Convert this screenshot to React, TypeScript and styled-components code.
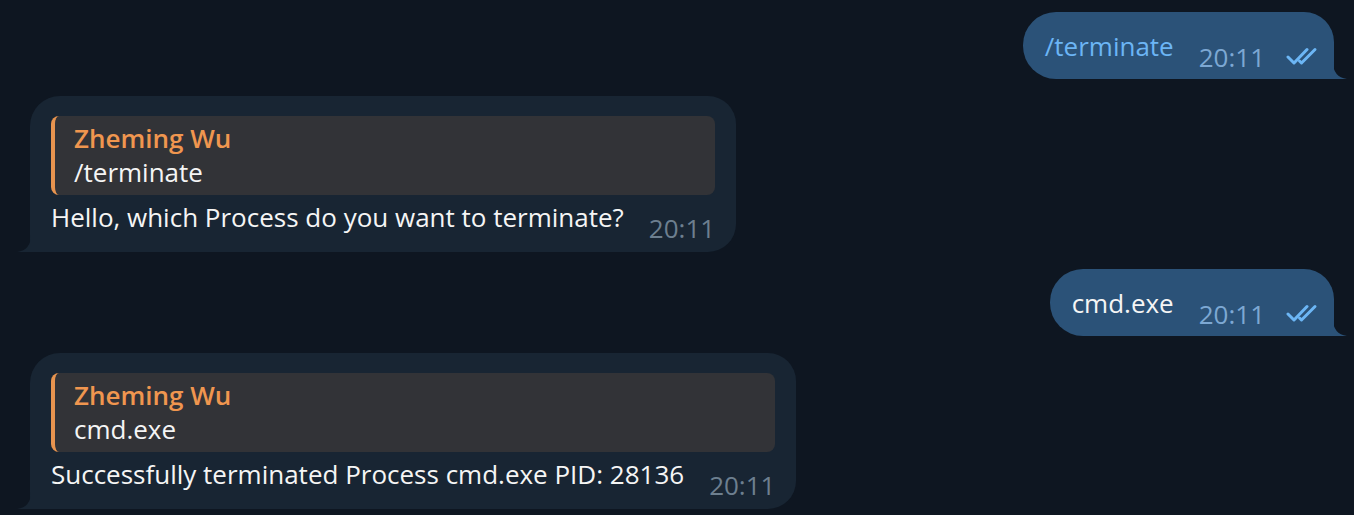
import React from "react";
import styled, { createGlobalStyle } from "styled-components";

const GlobalStyle = createGlobalStyle`
  html, body {
    margin: 0;
    padding: 0;
    background: #0e1621;
  }
  body {
    font-family: "Open Sans", "Noto Sans", sans-serif;
    -webkit-font-smoothing: antialiased;
  }
`;

type Side = "in" | "out";

type Message = {
  side: Side;
  text: string;
  time: string;
  command?: boolean;
  reply?: { author: string; text: string };
};

const messages: Message[] = [
  { side: "out", text: "/terminate", time: "20:11", command: true },
  {
    side: "in",
    text: "Hello, which Process do you want to terminate?",
    time: "20:11",
    reply: { author: "Zheming Wu", text: "/terminate" },
  },
  { side: "out", text: "cmd.exe", time: "20:11" },
  {
    side: "in",
    text: "Successfully terminated Process cmd.exe PID: 28136",
    time: "20:11",
    reply: { author: "Zheming Wu", text: "cmd.exe" },
  },
];

const Chat = styled.main`
  display: flex;
  flex-direction: column;
  gap: 17px;
  padding: 12px 20px 8px 30px;
  min-height: 515px;
  box-sizing: border-box;
`;

const Row = styled.div<{ $side: Side }>`
  display: flex;
  justify-content: ${(p) => (p.$side === "out" ? "flex-end" : "flex-start")};
`;

const Bubble = styled.div<{ $side: Side; $reply?: boolean }>`
  position: relative;
  background: ${(p) => (p.$side === "out" ? "#2b5278" : "#182533")};
  border-radius: ${(p) => (p.$side === "out" ? "33px 30px 0 33px" : "30px 28px 28px 0")};
  padding: ${(p) => (p.$reply ? "20px" : "17px")} ${(p) => (p.$side === "out" ? "12px" : "21px")}
    ${(p) => (p.$reply ? "9px" : "7px")} ${(p) => (p.$side === "out" ? "22px" : "21px")};
  display: flex;
  flex-direction: column;
`;

const Tail = styled.svg<{ $side: Side }>`
  position: absolute;
  bottom: 0;
  width: 14px;
  height: 17px;
  ${(p) => (p.$side === "out" ? "right: -13px;" : "left: -13px;")}
`;

const Quote = styled.div`
  background: #323337;
  border-left: 4px solid #e8944f;
  border-radius: 8px;
  padding: 5px 12px 5px 19px;
  margin-bottom: 5px;
`;

const QuoteAuthor = styled.div`
  color: #f0964f;
  font-weight: 600;
  font-size: 26px;
  line-height: 34px;
`;

const QuoteText = styled.div`
  color: #f5f5f5;
  font-size: 26px;
  line-height: 35px;
`;

const Footer = styled.div`
  display: flex;
  align-items: flex-end;
  gap: 25px;
`;

const Text = styled.div<{ $command?: boolean }>`
  color: ${(p) => (p.$command ? "#6cb5f5" : "#f5f5f5")};
  font-size: 26px;
  line-height: 35px;
  margin-bottom: 8px;
  white-space: nowrap;
`;

const Meta = styled.div<{ $side: Side }>`
  display: flex;
  align-items: center;
  gap: 21px;
  color: ${(p) => (p.$side === "out" ? "#7da8d3" : "#6d7f8f")};
  font-size: 26px;
  line-height: 30px;
`;

const Checks = styled.svg`
  width: 36px;
  height: 20px;
  margin-top: -2px;
`;

const TailShape = ({ side }: { side: Side }) => (
  <Tail $side={side} viewBox="0 0 14 17">
    {side === "out" ? (
      <path d="M0 0 Q0 15 14 17 L0 17 Z" fill="#2b5278" />
    ) : (
      <path d="M14 0 Q14 15 0 17 L14 17 Z" fill="#182533" />
    )}
  </Tail>
);

const DoubleCheck = () => (
  <Checks viewBox="0 0 36 20">
    <g fill="none" stroke="#6cb6f5" strokeWidth="3" strokeLinecap="round" strokeLinejoin="round">
      <path d="M2 11 L8 17 L21 3.5" />
      <path d="M13.5 15 L15.5 17 L29 3.5" />
    </g>
  </Checks>
);

const App: React.FC = () => (
  <>
    <GlobalStyle />
    <Chat>
      {messages.map((m, i) => (
        <Row key={i} $side={m.side}>
          <Bubble $side={m.side} $reply={!!m.reply}>
            {m.reply && (
              <Quote>
                <QuoteAuthor>{m.reply.author}</QuoteAuthor>
                <QuoteText>{m.reply.text}</QuoteText>
              </Quote>
            )}
            <Footer>
              <Text $command={m.command}>{m.text}</Text>
              <Meta $side={m.side}>
                <span>{m.time}</span>
                {m.side === "out" && <DoubleCheck />}
              </Meta>
            </Footer>
            <TailShape side={m.side} />
          </Bubble>
        </Row>
      ))}
    </Chat>
  </>
);

export default App;
